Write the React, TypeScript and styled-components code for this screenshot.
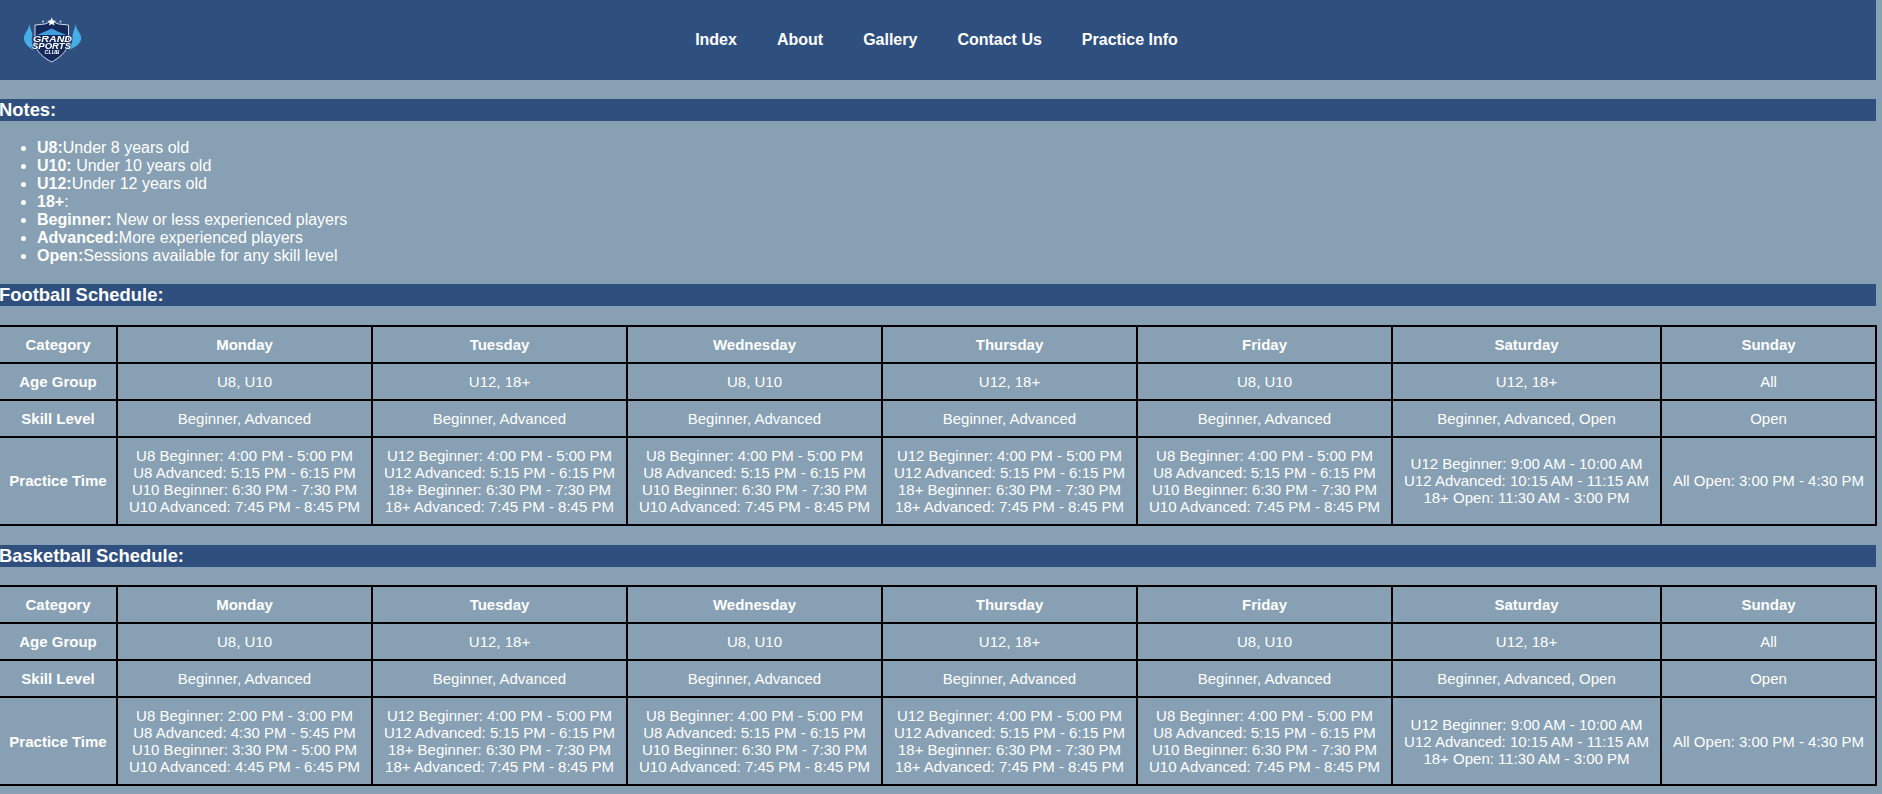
import React from "react";
import styled, { createGlobalStyle } from "styled-components";

const Global = createGlobalStyle`
  html, body { margin: 0; padding: 0; background: #87a0b4; }
  body { font-family: "Liberation Sans", Arial, sans-serif; color: #fff; font-size: 16px; }
`;

const Page = styled.div`
  width: 1876px;
`;

const Header = styled.header`
  height: 80px;
  background: #2f4f7f;
  display: grid;
  grid-template-columns: 1fr auto 1fr;
  padding-right: 3px;
  box-sizing: border-box;
`;

const LogoWrap = styled.div`
  padding: 15px 0 0 20px;
`;

const LogoImage = styled.svg`
  display: block;
  filter: blur(0.3px);
`;

const Nav = styled.nav`
  display: flex;
  gap: 40px;
  padding-top: 31px;
`;

const NavLink = styled.a`
  color: #fff;
  font-weight: bold;
  font-size: 16px;
  line-height: 18px;
  text-decoration: none;
`;

const SectionTitle = styled.h3`
  margin: 18.72px 0;
  background: #2f4f7f;
  font-size: 18.4px;
  font-weight: bold;
  line-height: 22px;
  text-indent: -1px;
`;

const NoteList = styled.ul`
  margin: 16px 0;
  padding-left: 37px;
  line-height: 18px;
`;

const ScheduleTable = styled.table`
  width: 1876px;
  table-layout: fixed;
  border-collapse: collapse;
  font-size: 15px;
  line-height: 17px;
`;

const Column = styled.col<{ $w: number }>`
  width: ${(p) => p.$w}px;
`;

const HeadCell = styled.th`
  border: 2px solid #000;
  padding: 9px 5px;
  font-weight: bold;
  text-align: center;
  &:first-child { border-left: 0; }
`;

const Cell = styled.td`
  border: 2px solid #000;
  padding: 9px 5px;
  text-align: center;
`;

const Line = styled.div``;

const Logo = () => (
  <LogoImage width="64" height="50" viewBox="0 0 64 50" aria-label="Grand Sports Club">
    <g fill="#45aee8">
      <path d="M9 8 C10 12 7 15 5 19 C2 24 5 30 13 35 C14 32 13 30 12 28 C11 23 13 21 12 18 C11 15 10 12 9 8 Z" />
      <path d="M56 8 C55 12 58 15 60.5 20 C63 25 59 31 49 35 C48 32 50 30 52 28 C53 23 52 21 53 18 C54 15 55 12 56 8 Z" />
    </g>
    <path d="M15 10 L25 9 L31.7 6 L38.5 9 L48.5 10 L48.5 28 C47 37 39 43 31.7 47 C24 43 16 37 15 28 Z" fill="#14295a" stroke="#e4edf5" strokeWidth="0.9" />
    <path d="M17 20 L24 17 L31.7 13.5 L39 17 L46.5 20 Z" fill="#3f9fdc" />
    <path d="M31.7 2.5 L33 5.6 L36 5.8 L33.7 7.8 L34.5 10.6 L31.7 9 L28.9 10.6 L29.7 7.8 L27.4 5.8 L30.4 5.6 Z" fill="#fff" />
    <g fill="#cfe0ee">
      <circle cx="23" cy="6.5" r="0.9" />
      <circle cx="40.5" cy="6.5" r="0.9" />
    </g>
    <g fontFamily="Liberation Sans, sans-serif" fontWeight="bold" fontStyle="italic" textAnchor="middle" fill="#fff" stroke="#14295a" strokeWidth="1" style={{ paintOrder: "stroke" }}>
      <text x="32.5" y="26.5" fontSize="8.5" textLength="39" lengthAdjust="spacingAndGlyphs">GRAND</text>
      <text x="31.5" y="34" fontSize="8.5" textLength="39" lengthAdjust="spacingAndGlyphs">SPORTS</text>
      <text x="32" y="39.4" fontSize="4.5" strokeWidth="0" textLength="15" lengthAdjust="spacingAndGlyphs">CLUB</text>
    </g>
  </LogoImage>
);

const links = ["Index", "About", "Gallery", "Contact Us", "Practice Info"];

const notes: [string, string][] = [
  ["U8:", "Under 8 years old"],
  ["U10:", " Under 10 years old"],
  ["U12:", "Under 12 years old"],
  ["18+", ":"],
  ["Beginner:", " New or less experienced players"],
  ["Advanced:", "More experienced players"],
  ["Open:", "Sessions available for any skill level"],
];

const days = ["Monday", "Tuesday", "Wednesday", "Thursday", "Friday", "Saturday", "Sunday"];
const widths = [117, 255, 255, 255, 255, 255, 269, 215];
const ages = ["U8, U10", "U12, 18+", "U8, U10", "U12, 18+", "U8, U10", "U12, 18+", "All"];
const BA = "Beginner, Advanced";
const skills = [BA, BA, BA, BA, BA, "Beginner, Advanced, Open", "Open"];

const u8 = ["U8 Beginner: 4:00 PM - 5:00 PM", "U8 Advanced: 5:15 PM - 6:15 PM", "U10 Beginner: 6:30 PM - 7:30 PM", "U10 Advanced: 7:45 PM - 8:45 PM"];
const footballU12 = ["U12 Beginner: 4:00 PM - 5:00 PM", "U12 Advanced: 5:15 PM - 6:15 PM", "18+ Beginner: 6:30 PM - 7:30 PM", "18+ Advanced: 7:45 PM - 8:45 PM"];
const sat = ["U12 Beginner: 9:00 AM - 10:00 AM", "U12 Advanced: 10:15 AM - 11:15 AM", "18+ Open: 11:30 AM - 3:00 PM"];
const sun = ["All Open: 3:00 PM - 4:30 PM"];
const basketMon = ["U8 Beginner: 2:00 PM - 3:00 PM", "U8 Advanced: 4:30 PM - 5:45 PM", "U10 Beginner: 3:30 PM - 5:00 PM", "U10 Advanced: 4:45 PM - 6:45 PM"];

const football = [u8, footballU12, u8, footballU12, u8, sat, sun];
const basketball = [basketMon, footballU12, u8, footballU12, u8, sat, sun];

const Schedule = ({ times }: { times: string[][] }) => (
  <ScheduleTable>
    <colgroup>
      {widths.map((w, i) => (
        <Column key={i} $w={w} />
      ))}
    </colgroup>
    <tbody>
      <tr>
        <HeadCell>Category</HeadCell>
        {days.map((d) => (
          <HeadCell key={d}>{d}</HeadCell>
        ))}
      </tr>
      <tr>
        <HeadCell>Age Group</HeadCell>
        {ages.map((a, i) => (
          <Cell key={i}>{a}</Cell>
        ))}
      </tr>
      <tr>
        <HeadCell>Skill Level</HeadCell>
        {skills.map((s, i) => (
          <Cell key={i}>{s}</Cell>
        ))}
      </tr>
      <tr>
        <HeadCell>Practice Time</HeadCell>
        {times.map((lines, i) => (
          <Cell key={i}>
            {lines.map((l) => (
              <Line key={l}>{l}</Line>
            ))}
          </Cell>
        ))}
      </tr>
    </tbody>
  </ScheduleTable>
);

export default function App() {
  return (
    <Page>
      <Global />
      <Header>
        <LogoWrap>
          <Logo />
        </LogoWrap>
        <Nav>
          {links.map((l) => (
            <NavLink key={l} href="#">
              {l}
            </NavLink>
          ))}
        </Nav>
      </Header>
      <SectionTitle>Notes:</SectionTitle>
      <NoteList>
        {notes.map(([b, t]) => (
          <li key={b}>
            <strong>{b}</strong>
            {t}
          </li>
        ))}
      </NoteList>
      <SectionTitle>Football Schedule:</SectionTitle>
      <Schedule times={football} />
      <SectionTitle>Basketball Schedule:</SectionTitle>
      <Schedule times={basketball} />
    </Page>
  );
}
